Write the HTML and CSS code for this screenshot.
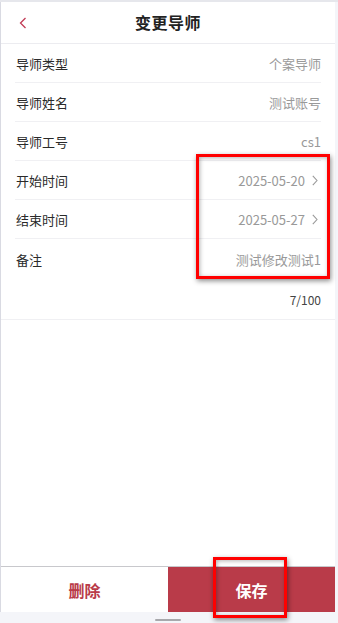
FILE: index.html
```html
<!DOCTYPE html>
<html lang="zh-CN">
<head>
    <meta charset="UTF-8">
    <meta name="viewport" content="width=device-width, initial-scale=1.0">
    <title>变更导师</title>
    <link rel="stylesheet" href="styles.css">
</head>
<body>

    <div class="top-strip"></div>

    <div class="page">
        <div class="header">
            <span class="back">
                <svg viewBox="0 0 8 12" width="8" height="12">
                    <polyline points="6.5,1 1.5,6 6.5,11" fill="none" stroke="#c23b55" stroke-width="1.3"/>
                </svg>
            </span>
            <div class="header-title">变更导师</div>
        </div>

        <div class="form">
            <div class="row">
                <span class="label">导师类型</span>
                <span class="value">个案导师</span>
            </div>
            <div class="row">
                <span class="label">导师姓名</span>
                <span class="value">测试账号</span>
            </div>
            <div class="row">
                <span class="label">导师工号</span>
                <span class="value">cs1</span>
            </div>
            <div class="row">
                <span class="label">开始时间</span>
                <span class="value">2025-05-20</span>
                <svg class="arrow" viewBox="0 0 6 11" width="6" height="11">
                    <polyline points="0.8,0.8 5,5.5 0.8,10.2" fill="none" stroke="#999" stroke-width="1.1"/>
                </svg>
            </div>
            <div class="row">
                <span class="label">结束时间</span>
                <span class="value">2025-05-27</span>
                <svg class="arrow" viewBox="0 0 6 11" width="6" height="11">
                    <polyline points="0.8,0.8 5,5.5 0.8,10.2" fill="none" stroke="#999" stroke-width="1.1"/>
                </svg>
            </div>
            <div class="remark">
                <div class="row last">
                    <span class="label">备注</span>
                    <span class="value">测试修改测试1</span>
                </div>
                <div class="counter">7/100</div>
            </div>
        </div>

        <div class="spacer"></div>

        <div class="actions">
            <button class="btn btn-delete">删除</button>
            <button class="btn btn-save">保存</button>
        </div>
    </div>

    <div class="home-bar">
        <span class="indicator"></span>
    </div>

    <!-- annotation boxes from the screenshot -->
    <div class="mark mark-fields"></div>
    <div class="mark mark-save"></div>

</body>
</html>
```

FILE: styles.css
```css
body {
    margin: 0;
    width: 338px;
    height: 623px;
    display: flex;
    flex-direction: column;
    background-color: #f4f5f9;
    font-family: "Noto Sans CJK SC", "Noto Sans", sans-serif;
    color: #333;
    overflow: hidden;
    position: relative;
}

.top-strip {
    height: 2px;
    background-color: #e6e7ec;
}

.page {
    flex: 1;
    width: 334px;
    display: flex;
    flex-direction: column;
    background-color: #fff;
    border-left: 1px solid #d9dae2;
}

.header {
    height: 41px;
    display: flex;
    align-items: center;
    justify-content: center;
    position: relative;
    border-bottom: 1px solid #ececf0;
}

.back {
    position: absolute;
    left: 18px;
    top: 15px;
    display: flex;
}

.header-title {
    font-size: 16px;
    font-weight: bold;
    color: #222;
    letter-spacing: 0.5px;
    margin-bottom: 2px;
}

.row {
    height: 38px;
    margin: 0 14px 0 14px;
    display: flex;
    align-items: center;
    border-bottom: 1px solid #f0f0f3;
    font-size: 13px;
}

.row.last {
    border-bottom: none;
    height: 40px;
}

.label {
    flex: 1;
    color: #2a2a2a;
    padding-left: 1px;
}

.value {
    color: #999;
}

.arrow {
    margin-left: 7px;
    margin-right: 3px;
}

.remark {
    border-bottom: 1px solid #f0f0f3;
}

.counter {
    height: 40px;
    padding-right: 14px;
    display: flex;
    align-items: center;
    justify-content: flex-end;
    font-size: 12px;
    color: #444;
}

.spacer {
    flex: 1;
}

.actions {
    display: flex;
    height: 45px;
    border-top: 1px solid #c8c8cc;
}

.btn {
    flex: 1;
    border: none;
    margin: 0;
    padding: 0;
    font-family: inherit;
    font-size: 16px;
    font-weight: bold;
    cursor: pointer;
}

.btn-delete {
    background-color: #fff;
    color: #b93b49;
}

.btn-save {
    background-color: #b93b49;
    color: #fff;
}

.home-bar {
    height: 11px;
    display: flex;
    justify-content: center;
    align-items: flex-end;
}

.indicator {
    width: 26px;
    height: 2px;
    margin-bottom: 2px;
    margin-right: 3px;
    background-color: #a8a8ac;
    border-radius: 1px;
}

.mark {
    position: absolute;
    border: 3px solid #f00;
    box-shadow: 1px 2px 5px rgba(0, 0, 0, 0.45), inset 1px 1px 4px rgba(0, 0, 0, 0.3);
}

.mark-fields {
    left: 196px;
    top: 154px;
    width: 128px;
    height: 119px;
}

.mark-save {
    left: 213px;
    top: 557px;
    width: 68px;
    height: 55px;
}
```
